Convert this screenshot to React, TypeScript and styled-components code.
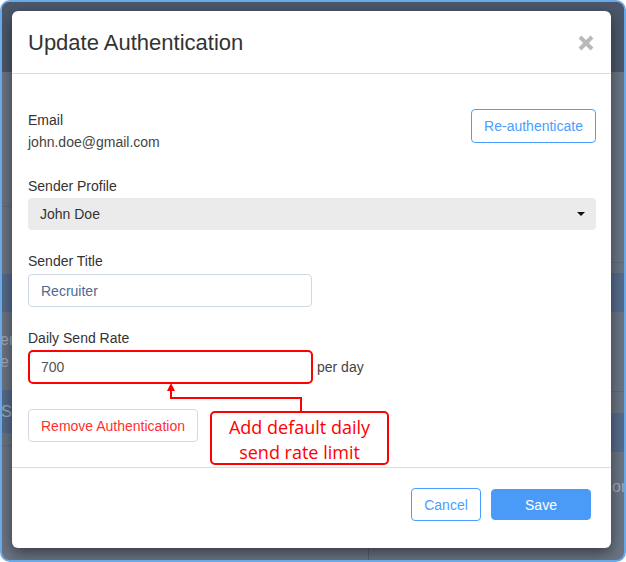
import React from "react";
import styled, { createGlobalStyle } from "styled-components";

const GlobalStyle = createGlobalStyle`
  html, body {
    margin: 0;
    padding: 0;
    background: #ffffff;
  }
  body {
    font-family: "Liberation Sans", Arial, sans-serif;
  }
`;

const Frame = styled.div`
  position: relative;
  width: 626px;
  height: 562px;
  box-sizing: border-box;
  border: 2px solid #6aa8e6;
  border-radius: 10px;
  overflow: hidden;
  display: flex;
  flex-direction: column;
  background: #6b7584;
`;

/* page behind the overlay */
const TopBar = styled.div`
  height: 70px;
  background: #4b586b;
`;

const PageBody = styled.div`
  flex: 1;
  display: grid;
  grid-template-columns: 366px 1fr;
`;

const Column = styled.div<{ $divider?: boolean }>`
  display: flex;
  flex-direction: column;
  border-left: ${(p) => (p.$divider ? "1px solid #59636f" : "none")};
`;

const Strip = styled.div<{ $h: number; $band?: boolean; $line?: boolean }>`
  box-sizing: border-box;
  height: ${(p) => p.$h}px;
  background: ${(p) => (p.$band ? "#566c8c" : "transparent")};
  border-bottom: ${(p) => (p.$line ? "1px solid #616b7a" : "none")};
  display: flex;
  flex-direction: column;
  justify-content: center;
`;

const GhostText = styled.div<{ $indent: number }>`
  margin-left: ${(p) => p.$indent}px;
  font-size: 16px;
  line-height: 22px;
  color: #a3abb8;
  white-space: nowrap;
`;

/* modal */
const Modal = styled.div`
  position: absolute;
  top: 9px;
  left: 10px;
  width: 599px;
  height: 537px;
  background: #ffffff;
  border-radius: 6px;
  box-shadow: 0 5px 15px rgba(0, 0, 0, 0.5);
  display: flex;
  flex-direction: column;
`;

const Header = styled.div`
  display: flex;
  align-items: center;
  justify-content: space-between;
  padding: 16px 17px 15px 16px;
  border-bottom: 1px solid #d5dde5;
`;

const Title = styled.h4`
  margin: 0;
  font-size: 22px;
  font-weight: normal;
  line-height: 31px;
  color: #333333;
`;

const CloseButton = styled.button`
  border: 0;
  padding: 0;
  background: none;
  width: 16px;
  height: 16px;
  display: flex;
  cursor: pointer;
`;

const Body = styled.div`
  position: relative;
  padding: 35px 15px 25px 16px;
  display: flex;
  flex-direction: column;
  align-items: flex-start;
`;

const EmailRow = styled.div`
  align-self: stretch;
  display: flex;
  justify-content: space-between;
  align-items: flex-start;
`;

const Label = styled.div<{ $gap?: number }>`
  margin-top: ${(p) => p.$gap ?? 0}px;
  font-size: 14px;
  line-height: 22px;
  color: #333333;
`;

const Value = styled.div`
  font-size: 14px;
  line-height: 22px;
  color: #444444;
`;

const Select = styled.div`
  align-self: stretch;
  margin-top: 1px;
  height: 32px;
  box-sizing: border-box;
  padding: 0 11px 0 12px;
  background: #ebebeb;
  border-radius: 4px;
  display: flex;
  align-items: center;
  justify-content: space-between;
  font-size: 14px;
  color: #333333;
`;

const Caret = styled.span`
  width: 0;
  height: 0;
  border-left: 4px solid transparent;
  border-right: 4px solid transparent;
  border-top: 4px solid #111111;
`;

const InputRow = styled.div<{ $gap: number }>`
  margin-top: ${(p) => p.$gap}px;
  display: flex;
  align-items: center;
`;

const Input = styled.div<{ $highlight?: boolean }>`
  width: ${(p) => (p.$highlight ? 285 : 284)}px;
  height: ${(p) => (p.$highlight ? 34 : 33)}px;
  box-sizing: border-box;
  padding-left: ${(p) => (p.$highlight ? 11 : 12)}px;
  border: ${(p) => (p.$highlight ? "2px solid #ff0000" : "1px solid #cfd8e3")};
  border-radius: ${(p) => (p.$highlight ? 5 : 4)}px;
  display: flex;
  align-items: center;
  font-size: 14px;
  color: ${(p) => (p.$highlight ? "#555555" : "#4f6a95")};
`;

const Suffix = styled.span`
  margin-left: 4px;
  font-size: 14px;
  color: #444444;
`;

type Variant = "outline" | "danger" | "primary";

const Button = styled.button<{ $variant: Variant; $w?: number; $h?: number }>`
  box-sizing: border-box;
  width: ${(p) => (p.$w ? `${p.$w}px` : "auto")};
  height: ${(p) => p.$h ?? 34}px;
  padding: 0 12px;
  border-radius: 4px;
  font-family: "Liberation Sans", Arial, sans-serif;
  font-size: 14px;
  cursor: pointer;
  border: 1px solid
    ${(p) =>
      p.$variant === "danger"
        ? "#d3dae3"
        : p.$variant === "primary"
        ? "#4a9bf7"
        : "#4a9eff"};
  background: ${(p) => (p.$variant === "primary" ? "#4a9bf7" : "#ffffff")};
  color: ${(p) =>
    p.$variant === "danger"
      ? "#ff3030"
      : p.$variant === "primary"
      ? "#ffffff"
      : "#4a9eff"};
`;

const DangerButton = styled(Button)`
  margin-top: 25px;
`;

const Footer = styled.div`
  border-top: 1px solid #d5dde5;
  padding: 20px 20px 0;
  display: flex;
  justify-content: flex-end;
  align-items: center;
  gap: 10px;
`;

/* red callout drawn over the form */
const Callout = styled.div`
  position: absolute;
  left: 198px;
  top: 337px;
  width: 179px;
  height: 54px;
  box-sizing: border-box;
  padding-top: 2px;
  border: 2px solid #ff0000;
  border-radius: 5px;
  background: #ffffff;
  text-align: center;
  font-family: "Open Sans", "Liberation Sans", sans-serif;
  font-size: 18px;
  line-height: 25px;
  color: #ff0000;
`;

const Arrow = styled.svg`
  position: absolute;
  left: 148px;
  top: 304px;
`;

export default function App() {
  return (
    <>
      <GlobalStyle />
      <Frame>
        <TopBar />
        <PageBody>
          <Column>
            <Strip $h={135} $line />
            <Strip $h={67} />
            <Strip $h={38} $band />
            <Strip $h={78}>
              <GhostText $indent={-2}>er</GhostText>
              <GhostText $indent={-2}>e</GhostText>
            </Strip>
            <Strip $h={43} $band>
              <GhostText $indent={-1}>Sa</GhostText>
            </Strip>
            <Strip $h={13} $line />
          </Column>
          <Column $divider>
            <Strip $h={191} $line />
            <Strip $h={10} />
            <Strip $h={39} $band />
            <Strip $h={80} $line />
            <Strip $h={21} />
            <Strip $h={39} $band />
            <Strip $h={70}>
              <GhostText $indent={243}>or</GhostText>
            </Strip>
          </Column>
        </PageBody>

        <Modal>
          <Header>
            <Title>Update Authentication</Title>
            <CloseButton aria-label="Close">
              <svg width="16" height="16" viewBox="0 0 16 16">
                <path
                  d="M2 2 L14 14 M14 2 L2 14"
                  stroke="#b9b9b9"
                  strokeWidth="4"
                  fill="none"
                />
              </svg>
            </CloseButton>
          </Header>

          <Body>
            <EmailRow>
              <div>
                <Label>Email</Label>
                <Value>john.doe@gmail.com</Value>
              </div>
              <Button $variant="outline" $w={125}>
                Re-authenticate
              </Button>
            </EmailRow>

            <Label $gap={22}>Sender Profile</Label>
            <Select>
              John Doe
              <Caret />
            </Select>

            <Label $gap={20}>Sender Title</Label>
            <InputRow $gap={2}>
              <Input>Recruiter</Input>
            </InputRow>

            <Label $gap={20}>Daily Send Rate</Label>
            <InputRow $gap={1}>
              <Input $highlight>700</Input>
              <Suffix>per day</Suffix>
            </InputRow>

            <DangerButton $variant="danger" $h={33}>
              Remove Authentication
            </DangerButton>

            <Arrow width="150" height="46" viewBox="0 0 150 46">
              <path
                d="M141 34 V20 H11 V12"
                stroke="#ff0000"
                strokeWidth="2"
                fill="none"
              />
              <polygon points="11,5 7,13 15,13" fill="#ff0000" />
            </Arrow>
            <Callout>
              Add default daily
              <br />
              send rate limit
            </Callout>
          </Body>

          <Footer>
            <Button $variant="outline" $w={70} $h={33}>
              Cancel
            </Button>
            <Button $variant="primary" $w={100} $h={31}>
              Save
            </Button>
          </Footer>
        </Modal>
      </Frame>
    </>
  );
}
